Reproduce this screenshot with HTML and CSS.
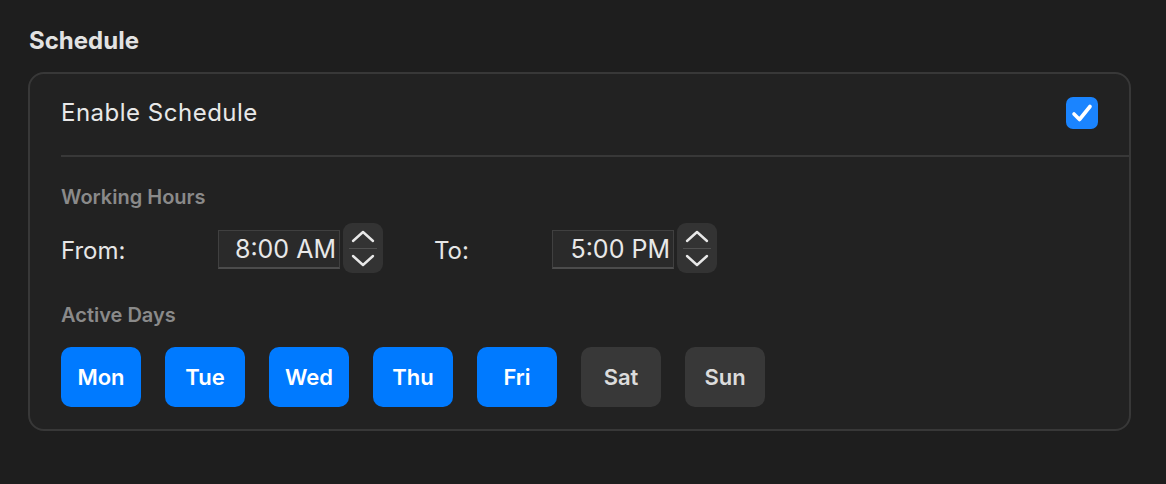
FILE: index.html
```html
<!DOCTYPE html>
<html lang="en">
<head>
  <meta charset="UTF-8" />
  <title>Schedule</title>
  <link rel="stylesheet" href="styles.css">
</head>
<body>
  <h2 class="section-title">Schedule</h2>

  <div class="card">
    <div class="enable-row">
      <span class="enable-label">Enable Schedule</span>
      <span class="checkbox">
        <svg width="22" height="20" viewBox="0 0 22 20">
          <path d="M3 11 L8.5 16.5 L19 3.5" fill="none" stroke="#fff" stroke-width="3.6" stroke-linecap="round" stroke-linejoin="round"/>
        </svg>
      </span>
    </div>

    <div class="card-body">
      <p class="group-label">Working Hours</p>
      <div class="hours-row">
        <span class="field-label from">From:</span>
        <span class="time-field">8:00 AM</span>
        <span class="stepper">
          <svg width="26" height="13" viewBox="0 0 26 13"><path d="M3 11 L13 2 L23 11" fill="none" stroke="#e8e8e8" stroke-width="2.4" stroke-linecap="round" stroke-linejoin="round"/></svg>
          <span class="stepper-line"></span>
          <svg width="26" height="13" viewBox="0 0 26 13"><path d="M3 2 L13 11 L23 2" fill="none" stroke="#e8e8e8" stroke-width="2.4" stroke-linecap="round" stroke-linejoin="round"/></svg>
        </span>
        <span class="field-label to">To:</span>
        <span class="time-field">5:00 PM</span>
        <span class="stepper">
          <svg width="26" height="13" viewBox="0 0 26 13"><path d="M3 11 L13 2 L23 11" fill="none" stroke="#e8e8e8" stroke-width="2.4" stroke-linecap="round" stroke-linejoin="round"/></svg>
          <span class="stepper-line"></span>
          <svg width="26" height="13" viewBox="0 0 26 13"><path d="M3 2 L13 11 L23 2" fill="none" stroke="#e8e8e8" stroke-width="2.4" stroke-linecap="round" stroke-linejoin="round"/></svg>
        </span>
      </div>

      <p class="group-label days-label">Active Days</p>
      <div class="days">
        <button class="day active">Mon</button>
        <button class="day active">Tue</button>
        <button class="day active">Wed</button>
        <button class="day active">Thu</button>
        <button class="day active">Fri</button>
        <button class="day">Sat</button>
        <button class="day">Sun</button>
      </div>
    </div>
  </div>
</body>
</html>
```

FILE: styles.css
```css
body {
  margin: 0;
  padding: 26px 35px 0 28px;
  background: #1e1e1e;
  font-family: Inter, 'Noto Sans', sans-serif;
  color: #e6e6e6;
}
.section-title {
  margin: 0 0 16px 1px;
  font-size: 24px;
  font-weight: 700;
  line-height: 30px;
  color: #e2e2e2;
}
.card {
  background: #222222;
  border: 2px solid #383838;
  border-radius: 16px;
  height: 355px;
}
.enable-row {
  display: flex;
  align-items: center;
  justify-content: space-between;
  margin-left: 31px;
  padding-right: 31px;
  height: 81px;
  border-bottom: 2px solid #383838;
}
.enable-label {
  font-size: 24px;
  letter-spacing: 0.5px;
  color: #e8e8e8;
  margin-top: -4px;
}
.checkbox {
  width: 32px;
  height: 32px;
  border-radius: 7px;
  background: #1a84ff;
  display: flex;
  align-items: center;
  justify-content: center;
  margin-top: -4px;
}
.card-body {
  padding: 28px 0 0 31px;
}
.group-label {
  margin: 0;
  font-size: 20px;
  font-weight: 600;
  line-height: 24px;
  color: #8a8a8a;
}
.hours-row {
  display: flex;
  align-items: center;
  margin-top: 14px;
  height: 50px;
}
.field-label {
  font-size: 24px;
  color: #e6e6e6;
  margin-top: 4px;
}
.from {
  width: 157px;
}
.to {
  width: 118px;
  margin-left: 51px;
}
.time-field {
  box-sizing: border-box;
  width: 122px;
  height: 39px;
  margin-top: 2px;
  background: #2a2a2a;
  border: 1px solid #404040;
  border-bottom: 2px solid #4c4c4c;
  font-size: 25px;
  line-height: 37px;
  text-align: right;
  padding-right: 3px;
  color: #e8e8e8;
}
.stepper {
  box-sizing: border-box;
  width: 40px;
  height: 50px;
  margin-left: 3px;
  background: #333333;
  border-radius: 9px;
  display: flex;
  flex-direction: column;
  align-items: center;
  justify-content: center;
  gap: 5px;
}
.stepper-line {
  width: 28px;
  height: 1px;
  background: #505050;
}
.days-label {
  margin-top: 30px;
}
.days {
  display: flex;
  gap: 24px;
  margin-top: 20px;
}
.day {
  width: 80px;
  height: 60px;
  border: none;
  border-radius: 10px;
  background: #383838;
  color: #dcdcdc;
  font-family: Inter, 'Noto Sans', sans-serif;
  font-size: 22px;
  font-weight: 600;
  padding: 0;
}
.day.active {
  background: #007aff;
  color: #ffffff;
}
```
